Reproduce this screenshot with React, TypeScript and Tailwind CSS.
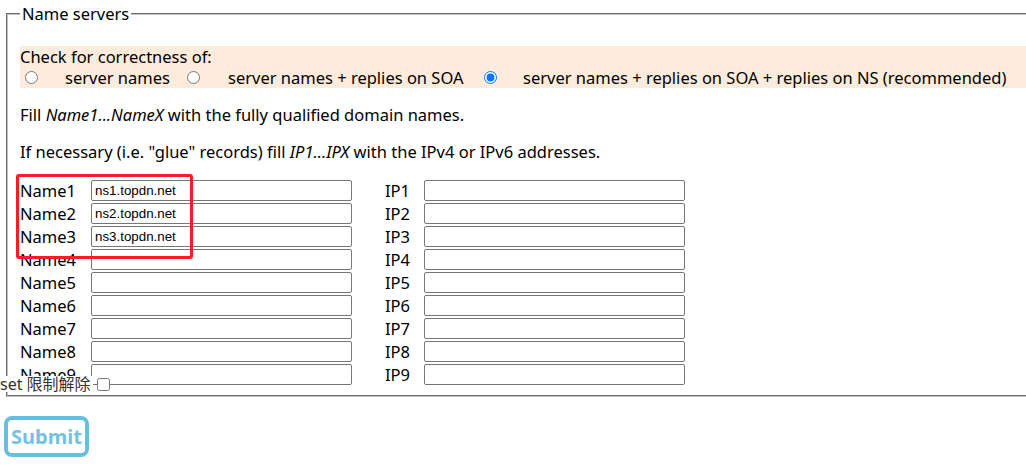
import { FC } from "react";

const names = ["ns1.topdn.net", "ns2.topdn.net", "ns3.topdn.net", "", "", "", "", "", ""];

const inputCls =
  "h-[21px] w-[261px] rounded-[2px] border border-[#767676] bg-white px-[3px] text-[13.33px] text-black outline-none [font-family:'Liberation_Sans',Arial,sans-serif]";

const NameRow: FC<{ index: number; value: string }> = ({ index, value }) => {
  return (
    <>
      <label className="leading-[21px]">Name{index}</label>
      <input type="text" className={inputCls} defaultValue={value} />
      <span />
      <label className="leading-[21px]">IP{index}</label>
      <input type="text" className={inputCls} defaultValue="" />
    </>
  );
};

export default function App() {
  return (
    <div className="relative h-[467px] w-full overflow-hidden bg-white text-[16.5px] text-black [font-family:'Noto_Sans','Noto_Sans_CJK_SC',sans-serif]">
      <fieldset className="ml-[6px] mt-[3px] w-[1060px] border-2 border-[#c0c0c0] px-[12px] pb-[10px] pt-[6px] [border-style:groove]">
        <legend className="px-[2px] leading-[21px]">Name servers</legend>

        <div className="my-4 bg-[#fdecdc] leading-[21px]">
          <div>Check for correctness of:</div>
          <div className="flex h-[21px] items-center">
            <input type="radio" name="check" className="m-0 ml-[5px] h-[13px] w-[13px]" />
            <span className="ml-[27px] w-[101px] whitespace-nowrap">server names</span>
            <input type="radio" name="check" className="m-0 ml-[21px] h-[13px] w-[13px]" />
            <span className="ml-[28px] w-[213px] whitespace-nowrap">server names + replies on SOA</span>
            <input type="radio" name="check" defaultChecked className="m-0 ml-[43px] h-[13px] w-[13px]" />
            <span className="ml-[26px] whitespace-nowrap">
              server names + replies on SOA + replies on NS (recommended)
            </span>
          </div>
        </div>

        <p className="my-4 leading-[21px]">
          Fill <i>Name1...NameX</i> with the fully qualified domain names.
        </p>
        <p className="my-4 leading-[21px]">
          If necessary (i.e. "glue" records) fill <i>IP1...IPX</i> with the IPv4 or IPv6 addresses.
        </p>

        <div className="grid grid-cols-[71px_261px_33px_39px_261px] items-center gap-y-[2px] pt-[2px]">
          {names.map((n, i) => (
            <NameRow key={i} index={i + 1} value={n} />
          ))}
        </div>
      </fieldset>

      <button
        type="button"
        className="ml-[4px] mt-[19px] h-[41px] w-[85px] rounded-[8px] border-4 border-[#67bfe0] bg-white text-[20px] font-bold text-[#72c3e3] [font-family:'Noto_Sans',sans-serif]"
      >
        Submit
      </button>

      {/* red annotation around the filled names */}
      <div className="pointer-events-none absolute left-[16px] top-[174px] h-[85px] w-[177px] rounded-[3px] border-[3px] border-[#f22020]" />

      {/* floating toggle over the bottom of the form */}
      <div className="absolute left-0 top-[376px] flex items-center">
        <span className="whitespace-nowrap bg-white pr-[2px] text-[16px] leading-[16px] text-[#333]">set 限制解除</span>
        <input type="checkbox" className="m-0 ml-[4px] h-[13px] w-[13px]" />
      </div>
    </div>
  );
}
